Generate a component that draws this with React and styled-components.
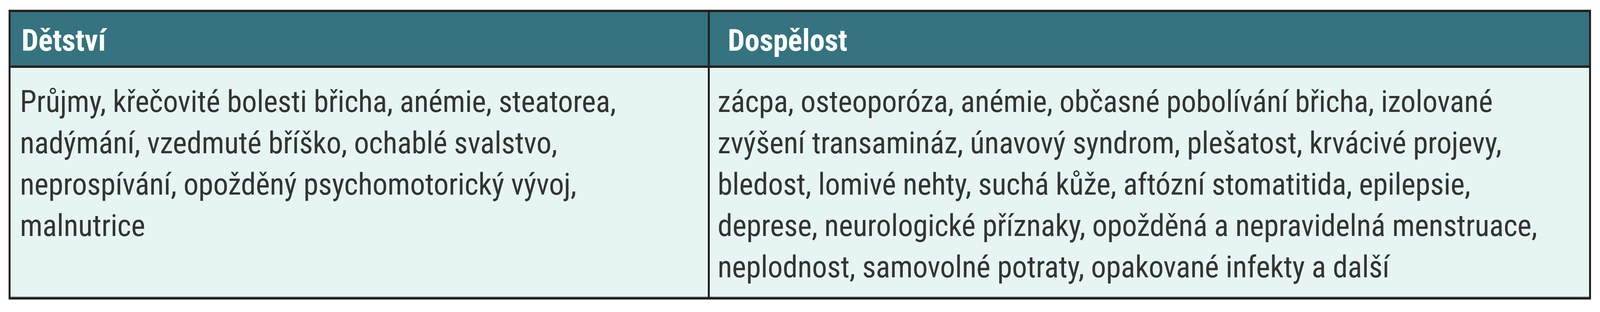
import React from "react";
import styled, { createGlobalStyle } from "styled-components";

const GlobalStyle = createGlobalStyle`
  html, body { margin: 0; padding: 0; background: #ffffff; }
  body { font-family: "Roboto", "Lato", sans-serif; }
`;

const Page = styled.div`
  padding: 25px 0 0 22px;
`;

const Table = styled.div`
  width: 4051px;
  box-sizing: border-box;
  display: grid;
  grid-template-columns: 1785px minmax(0, 1fr);
  grid-template-rows: 137px 588px;
  column-gap: 5px;
  row-gap: 6px;
  padding: 6px 5px;
  background: #231f20;
  overflow: hidden;
`;

const Cell = styled.div`
  min-width: 0;
  font-family: "Roboto", "Lato", sans-serif;
  font-stretch: 75%;
  font-size: 77px;
  line-height: 106px;
  letter-spacing: -0.2px;
`;

const HeadCell = styled(Cell)`
  background: #34737f;
  color: #ffffff;
  font-weight: 700;
  padding: 20px 0 0 ${(p) => p.$indent}px;
  white-space: nowrap;
`;

const BodyCell = styled(Cell)`
  background: #e6f5f2;
  color: #333333;
  font-weight: 400;
  padding: 34px 0 0 ${(p) => p.$indent}px;
  box-shadow: inset 0 -2px 0 #9ba3a2;
`;

const Line = styled.div`
  white-space: nowrap;
`;

const childhood = [
  "Průjmy, křečovité bolesti břicha, anémie, steatorea,",
  "nadýmání, vzedmuté bříško, ochablé svalstvo,",
  "neprospívání, opožděný psychomotorický vývoj,",
  "malnutrice",
];

const adulthood = [
  "zácpa, osteoporóza, anémie, občasné pobolívání břicha, izolované",
  "zvýšení transamináz, únavový syndrom, plešatost, krvácivé projevy,",
  "bledost, lomivé nehty, suchá kůže, aftózní stomatitida, epilepsie,",
  "deprese, neurologické příznaky, opožděná a nepravidelná menstruace,",
  "neplodnost, samovolné potraty, opakované infekty a další",
];

export default function App() {
  return (
    <>
      <GlobalStyle />
      <Page>
        <Table>
          <HeadCell $indent={28}>Dětství</HeadCell>
          <HeadCell $indent={46}>Dospělost</HeadCell>
          <BodyCell $indent={24}>
            {childhood.map((t) => (
              <Line key={t}>{t}</Line>
            ))}
          </BodyCell>
          <BodyCell $indent={20}>
            {adulthood.map((t) => (
              <Line key={t}>{t}</Line>
            ))}
          </BodyCell>
        </Table>
      </Page>
    </>
  );
}
